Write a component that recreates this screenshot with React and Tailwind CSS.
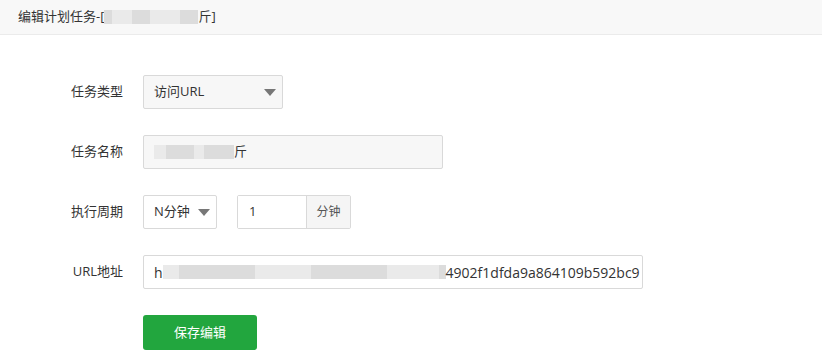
/**
 * Edit scheduled task form
 */
const font = { fontFamily: '"Open Sans", "Noto Sans CJK SC", sans-serif' };

function Caret() {
  return (
    <svg width="12" height="7" viewBox="0 0 12 7" className="shrink-0">
      <path d="M0 0 L12 0 L6 7 Z" fill="#777" />
    </svg>
  );
}

function Blur({ w, light }) {
  return (
    <span
      className={`inline-block h-[14px] align-middle ${light ? 'bg-[#eaeaea]' : 'bg-[#dcdcdc]'}`}
      style={{ width: w }}
    />
  );
}

function Label({ children }) {
  return <div className="w-[143px] shrink-0 pr-[20px] text-right text-[13px] text-[#333]">{children}</div>;
}

export default function App() {
  return (
    <div className="w-[822px] h-[364px] bg-white overflow-hidden" style={font}>
      {/* Header */}
      <div className="h-[35px] bg-[#f8f8f8] border-b border-[#ebebeb] flex items-center pl-[18px] text-[13px] text-[#333]">
        编辑计划任务-[<span className="inline-flex items-center"><Blur w={8} /><Blur w={20} light /><Blur w={18} /><Blur w={30} light /><Blur w={18} /></span>斤]
      </div>

      <div className="pt-[40px] flex flex-col gap-[26px]">
        {/* Task type */}
        <div className="flex items-center">
          <Label>任务类型</Label>
          <div className="w-[140px] h-[34px] border border-[#d9d9d9] bg-[#f7f7f7] rounded-[2px] flex items-center justify-between pl-[10px] pr-[6px] text-[13px] text-[#333]">
            <span>访问URL</span>
            <Caret />
          </div>
        </div>

        {/* Task name */}
        <div className="flex items-center">
          <Label>任务名称</Label>
          <div className="w-[300px] h-[34px] border border-[#d9d9d9] bg-[#f7f7f7] rounded-[2px] flex items-center pl-[10px] text-[13px] text-[#333]">
            <Blur w={12} light />
            <Blur w={28} />
            <Blur w={10} light />
            <Blur w={30} />
            <span>斤</span>
          </div>
        </div>

        {/* Period */}
        <div className="flex items-center">
          <Label>执行周期</Label>
          <div className="w-[74px] h-[34px] border border-[#d9d9d9] bg-white rounded-[2px] flex items-center justify-between pl-[10px] pr-[6px] text-[13px] text-[#333]">
            <span>N分钟</span>
            <Caret />
          </div>
          <div className="ml-[20px] h-[34px] flex border border-[#d9d9d9] rounded-[2px] text-[13px] text-[#333]">
            <div className="w-[68px] flex items-center pl-[11px] bg-white">1</div>
            <div className="w-[44px] flex items-center justify-center bg-[#f5f5f5] border-l border-[#d9d9d9] text-[12px] text-[#555]">分钟</div>
          </div>
        </div>

        {/* URL */}
        <div className="flex items-center">
          <Label>URL地址</Label>
          <div className="w-[500px] h-[34px] border border-[#d9d9d9] bg-white rounded-[2px] flex items-center pl-[10px] text-[14px] text-[#333] overflow-hidden whitespace-nowrap">
            <span>h</span>
            <Blur w={16} light />
            <Blur w={76} />
            <Blur w={56} light />
            <Blur w={76} />
            <Blur w={52} light />
            <Blur w={7} />
            <span>4902f1dfda9a864109b592bc9</span>
          </div>
        </div>

        {/* Save */}
        <div className="flex pl-[143px]">
          <button className="w-[114px] h-[35px] bg-[#22a63e] rounded-[3px] text-white text-[13px]">保存编辑</button>
        </div>
      </div>
    </div>
  );
}
